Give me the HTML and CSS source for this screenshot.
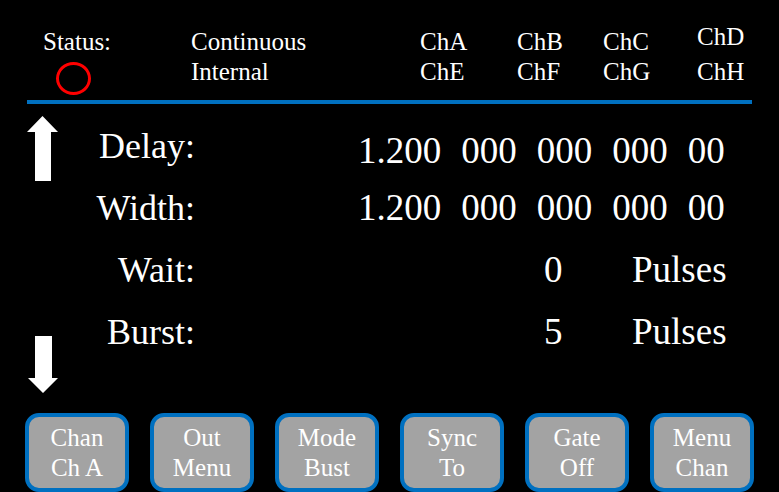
FILE: index.html
```html
<!DOCTYPE html>
<html>
<head>
<meta charset="utf-8">
<link rel="stylesheet" href="styles.css">
</head>
<body>
<div class="screen">
  <header class="header">
    <div class="status">
      <div class="line">Status:</div>
      <div class="status-led"></div>
    </div>
    <div class="col">
      <div class="line">Continuous</div>
      <div class="line">Internal</div>
    </div>
    <div class="col">
      <div class="line">ChA</div>
      <div class="line">ChE</div>
    </div>
    <div class="col">
      <div class="line">ChB</div>
      <div class="line">ChF</div>
    </div>
    <div class="col">
      <div class="line">ChC</div>
      <div class="line">ChG</div>
    </div>
    <div class="col col-raised">
      <div class="line">ChD</div>
      <div class="line">ChH</div>
    </div>
  </header>
  <div class="rule"></div>
  <main class="main">
    <div class="arrows">
      <svg class="arrow-up" width="31" height="65" viewBox="0 0 31 65"><polygon points="15.5,0 31,16 24,16 24,65 8,65 8,16 0,16" fill="#fff"/></svg>
      <svg class="arrow-down" width="31" height="57" viewBox="0 0 31 57"><polygon points="8,0 25,0 25,42 31,42 16,57 1,42 8,42" fill="#fff"/></svg>
    </div>
    <div class="params">
      <div class="label">Delay:</div>
      <div class="value value-low"><span>1.200</span><span>000</span><span>000</span><span>000</span><span>00</span></div>
      <div class="label">Width:</div>
      <div class="value"><span>1.200</span><span>000</span><span>000</span><span>000</span><span>00</span></div>
      <div class="label">Wait:</div>
      <div class="count">0</div>
      <div class="unit">Pulses</div>
      <div class="label">Burst:</div>
      <div class="count">5</div>
      <div class="unit">Pulses</div>
    </div>
  </main>
  <nav class="buttons">
    <div class="btn"><div>Chan</div><div>Ch A</div></div>
    <div class="btn"><div>Out</div><div>Menu</div></div>
    <div class="btn"><div>Mode</div><div>Bust</div></div>
    <div class="btn"><div>Sync</div><div>To</div></div>
    <div class="btn"><div>Gate</div><div>Off</div></div>
    <div class="btn"><div>Menu</div><div>Chan</div></div>
  </nav>
</div>
</body>
</html>
```
FILE: styles.css
```css
html, body {
  margin: 0;
  padding: 0;
  background: #000;
  overflow: hidden;
}
body {
  font-family: "Liberation Serif", "Times New Roman", serif;
  color: #fff;
}
.screen {
  width: 779px;
  height: 492px;
  overflow: hidden;
}
.header {
  height: 100px;
  box-sizing: border-box;
  padding: 27px 0 0 43px;
  display: grid;
  grid-template-columns: 148px 229px 97px 86px 94px 1fr;
  font-size: 25px;
  line-height: 30px;
}
.col {
  display: flex;
  flex-direction: column;
}
.col-raised .line:first-child {
  margin-top: -5px;
  margin-bottom: 5px;
}
.status-led {
  width: 35px;
  height: 33px;
  box-sizing: border-box;
  border: 3px solid #ff0000;
  border-radius: 50%;
  margin: 5px 0 0 13px;
}
.rule {
  height: 4px;
  margin: 0 27px;
  background: #0070c0;
}
.main {
  height: 309px;
  box-sizing: border-box;
  padding-left: 27px;
  display: flex;
}
.arrows {
  width: 31px;
  display: flex;
  flex-direction: column;
  justify-content: space-between;
  padding: 12px 0 20px;
}
.arrows svg {
  display: block;
}
.params {
  padding-top: 11px;
  display: grid;
  grid-template-columns: 137px 163px 186px 88px 1fr;
  grid-template-rows: repeat(4, 62px);
  font-size: 36px;
  line-height: 62px;
  white-space: nowrap;
}
.label {
  grid-column: 1;
  text-align: right;
}
.value {
  grid-column: 3 / 6;
  font-size: 37px;
  display: flex;
  gap: 20px;
}
.value-low {
  padding-top: 5px;
}
.count {
  grid-column: 4;
  font-size: 37px;
}
.unit {
  grid-column: 5;
  font-size: 37px;
}
.buttons {
  height: 79px;
  padding-left: 25px;
  display: flex;
  gap: 21px;
}
.btn {
  width: 104px;
  height: 79px;
  box-sizing: border-box;
  border: 4px solid #0070c0;
  border-radius: 14px;
  background: #a3a3a3;
  padding-top: 6px;
  font-size: 25px;
  line-height: 30px;
  text-align: center;
  color: #fff;
}
```
